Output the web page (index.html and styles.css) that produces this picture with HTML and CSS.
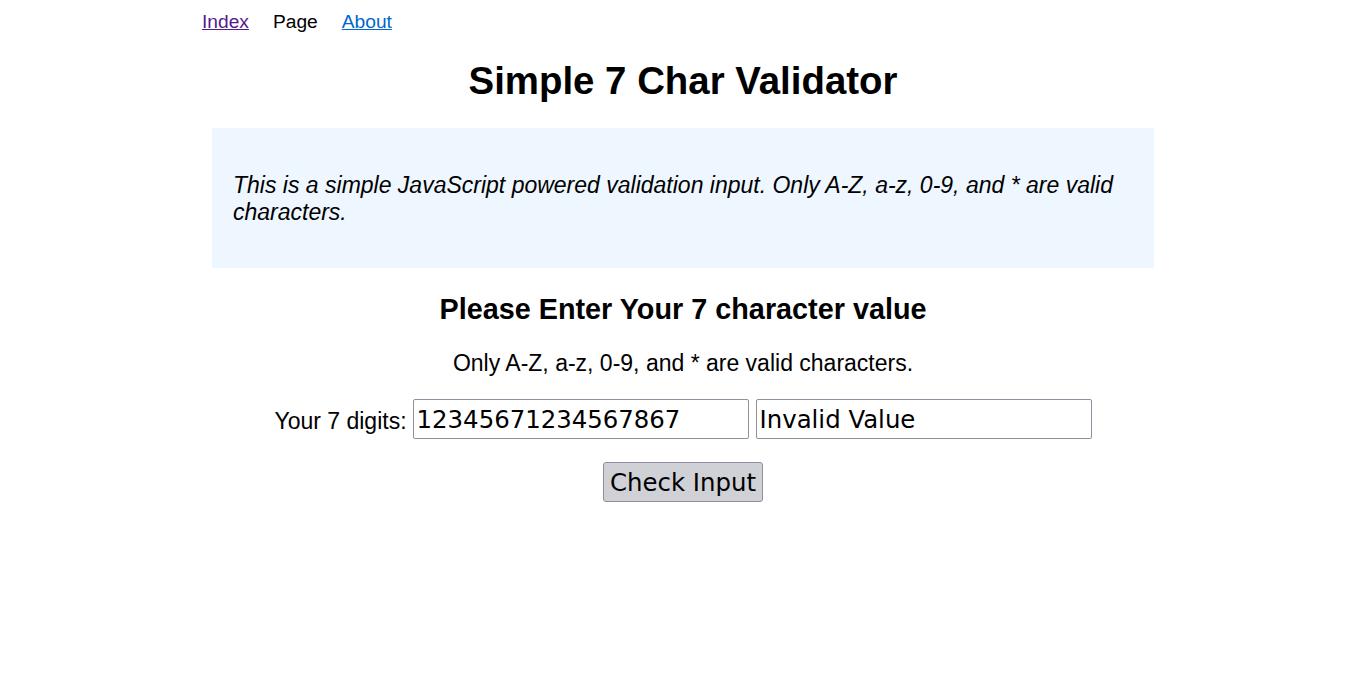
FILE: index.html
```html
<!DOCTYPE html>
<html>
<head>
<meta charset="utf-8">
<link rel="stylesheet" href="styles.css">
</head>
<body>
<div class="page">
  <nav class="nav">
    <a href="#" class="visited">Index</a>
    <span class="current">Page</span>
    <a href="#" class="link">About</a>
  </nav>
  <h1 class="title">Simple 7 Char Validator</h1>
  <div class="intro">
    <p>This is a simple JavaScript powered validation input. Only A-Z, a-z, 0-9, and * are valid characters.</p>
  </div>
  <h2 class="subtitle">Please Enter Your 7 character value</h2>
  <p class="hint">Only A-Z, a-z, 0-9, and * are valid characters.</p>
  <div class="row">
    <label class="label">Your 7 digits:</label>
    <input class="field" type="text" value="12345671234567867">
    <input class="field" type="text" value="Invalid Value">
  </div>
  <div class="actions">
    <button class="btn">Check Input</button>
  </div>
</div>
</body>
</html>
```
FILE: styles.css
```css
html, body { margin: 0; padding: 0; background: #fff; }
body { font-family: "Liberation Sans", Arial, sans-serif; color: #000; }
.page { width: 962px; margin: 0 auto; padding-top: 10px; }
.nav { display: flex; gap: 24px; font-size: 19.2px; line-height: 24px; }
.nav a.visited { color: #551a8b; }
.nav a.link { color: #0066cc; }
.title { text-align: center; font-size: 38.4px; margin: 26px 0 0; line-height: 42px; }
.intro { background: #eef6ff; margin: 26px 10px 0; padding: 21px 21px; height: 98px; }
.intro p { margin: 23px 0 0; font-style: italic; font-size: 23px; line-height: 27px; }
.subtitle { text-align: center; font-size: 28.8px; margin: 24px 0 0; line-height: 34px; }
.hint { text-align: center; font-size: 23px; margin: 23px 0 0; line-height: 28px; }
.row { display: flex; justify-content: center; align-items: center; gap: 6px; margin-top: 22px; }
.label { font-size: 23px; padding-top: 4px; }
.field { width: 336px; height: 40px; box-sizing: border-box; font-family: "DejaVu Sans", sans-serif; font-size: 24.4px; padding: 0 3px; border: 1px solid #8f8f9d; border-radius: 2px; }
.field + .field { margin-left: 1px; }
.actions { display: flex; justify-content: center; margin-top: 23px; }
.btn { font-family: "DejaVu Sans", sans-serif; font-size: 24.4px; height: 40px; width: 160px; padding: 0 5px; background: #d0d0d7; border: 1px solid #8f8f9d; border-radius: 3px; color: #000; }
```
